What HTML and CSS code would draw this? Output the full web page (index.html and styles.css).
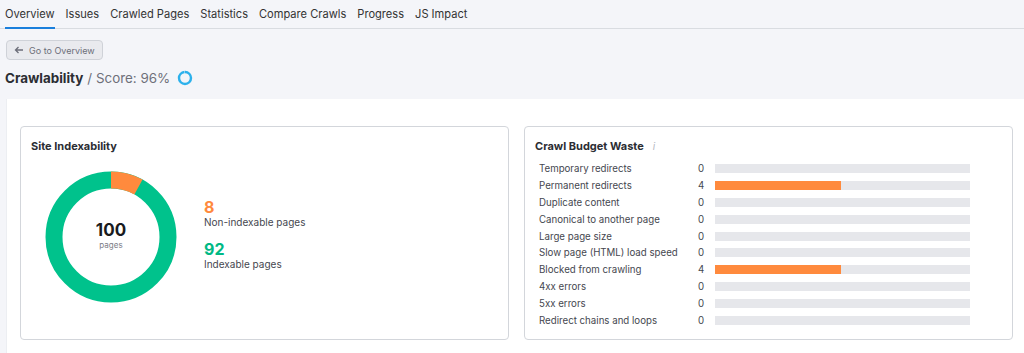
FILE: index.html
```html
<!DOCTYPE html>
<html lang="en">
<head>
    <meta charset="UTF-8">
    <meta name="viewport" content="width=device-width, initial-scale=1.0">
    <title>Site Audit - Crawlability</title>
    <link rel="stylesheet" href="styles.css">
</head>
<body>
    <nav class="tabs">
        <a class="tab active" href="#">Overview</a>
        <a class="tab" href="#">Issues</a>
        <a class="tab" href="#">Crawled Pages</a>
        <a class="tab" href="#">Statistics</a>
        <a class="tab" href="#">Compare Crawls</a>
        <a class="tab" href="#">Progress</a>
        <a class="tab" href="#">JS Impact</a>
    </nav>

    <div class="header">
        <button type="button" class="btn-back">
            <svg width="10" height="8" viewBox="0 0 10 8"><path d="M9 4H1.5M4.5 1L1.5 4l3 3" fill="none" stroke="#6c6e79" stroke-width="1.3"/></svg>
            Go to Overview
        </button>
        <h1 class="title">Crawlability <span class="score">/ Score: 96%</span>
            <svg class="score-ring" width="16" height="16" viewBox="0 0 16 16">
                <circle cx="8" cy="8" r="6" fill="none" stroke="#e6eef6" stroke-width="2.4"/>
                <circle cx="8" cy="8" r="6" fill="none" stroke="#2cb1ec" stroke-width="2.4" stroke-dasharray="36.2 37.7" transform="rotate(-90 8 8)"/>
            </svg>
        </h1>
    </div>

    <div class="panel">
        <div class="card">
            <h2 class="card-title">Site Indexability</h2>
            <div class="index-body">
                <div class="donut">
                    <svg width="132" height="132" viewBox="0 0 132 132">
                        <circle cx="66" cy="66" r="57" fill="none" stroke="#00c28c" stroke-width="17"/>
                        <circle cx="66" cy="66" r="57" fill="none" stroke="#ff8a3d" stroke-width="17" stroke-dasharray="28.65 358.1" transform="rotate(-90 66 66)"/>
                    </svg>
                    <div class="donut-label">
                        <div class="donut-num">100</div>
                        <div class="donut-sub">pages</div>
                    </div>
                </div>
                <div class="legend">
                    <div class="legend-item">
                        <div class="legend-num orange">8</div>
                        <div class="legend-text">Non-indexable pages</div>
                    </div>
                    <div class="legend-item">
                        <div class="legend-num green">92</div>
                        <div class="legend-text">Indexable pages</div>
                    </div>
                </div>
            </div>
        </div>

        <div class="card">
            <h2 class="card-title">Crawl Budget Waste <span class="info">i</span></h2>
            <div class="waste-list">
                <div class="waste-row"><span class="waste-label">Temporary redirects</span><span class="waste-count">0</span><div class="bar"></div></div>
                <div class="waste-row"><span class="waste-label">Permanent redirects</span><span class="waste-count">4</span><div class="bar"><div class="bar-fill" style="width: 49.5%"></div></div></div>
                <div class="waste-row"><span class="waste-label">Duplicate content</span><span class="waste-count">0</span><div class="bar"></div></div>
                <div class="waste-row"><span class="waste-label">Canonical to another page</span><span class="waste-count">0</span><div class="bar"></div></div>
                <div class="waste-row"><span class="waste-label">Large page size</span><span class="waste-count">0</span><div class="bar"></div></div>
                <div class="waste-row"><span class="waste-label">Slow page (HTML) load speed</span><span class="waste-count">0</span><div class="bar"></div></div>
                <div class="waste-row"><span class="waste-label">Blocked from crawling</span><span class="waste-count">4</span><div class="bar"><div class="bar-fill" style="width: 49.5%"></div></div></div>
                <div class="waste-row"><span class="waste-label">4xx errors</span><span class="waste-count">0</span><div class="bar"></div></div>
                <div class="waste-row"><span class="waste-label">5xx errors</span><span class="waste-count">0</span><div class="bar"></div></div>
                <div class="waste-row"><span class="waste-label">Redirect chains and loops</span><span class="waste-count">0</span><div class="bar"></div></div>
            </div>
        </div>
    </div>
</body>
</html>
```

FILE: styles.css
```css
body {
    font-family: Inter, "Noto Sans", sans-serif;
    margin: 0;
    padding: 0;
    background: #f4f5f9;
    color: #333;
    overflow: hidden;
}
.tabs {
    display: flex;
    gap: 11px;
    padding: 0 5px;
    height: 28px;
    border-bottom: 1px solid #d9dce1;
}
.tab {
    font-size: 11.1px;
    color: #333;
    text-decoration: none;
    border-bottom: 2px solid transparent;
    height: 27px;
    box-sizing: border-box;
    line-height: 28px;
}
.tab.active {
    border-bottom-color: #1a7fdc;
    height: 29px;
}
.header {
    padding: 11px 6px 0 5px;
}
.btn-back {
    display: flex;
    align-items: center;
    gap: 5px;
    height: 20px;
    padding: 0 7px;
    margin-left: 1px;
    background: #e9eaee;
    border: 1px solid #cfd2d8;
    border-radius: 4px;
    font-family: inherit;
    font-size: 9px;
    color: #6c6e79;
}
.title {
    display: flex;
    align-items: center;
    margin: 7px 0 0;
    height: 22px;
    font-size: 13.4px;
    font-weight: 700;
    color: #2b2d33;
}
.score {
    font-weight: 400;
    color: #6e7079;
    margin-left: 4px;
}
.score-ring {
    margin-left: 7px;
}
.panel {
    display: flex;
    gap: 15px;
    margin: 10px 0 0 6px;
    padding: 27px 10px 13px 13px;
    background: #fff;
    border-left: 1px solid #eceef2;
}
.card {
    flex: 0 0 489px;
    height: 214px;
    box-sizing: border-box;
    border: 1px solid #d3d6db;
    border-radius: 4px;
    padding: 12px 10px 0;
}
.card-title {
    font-size: 11px;
    font-weight: 700;
    margin: 0;
    color: #2b2d33;
    display: flex;
    align-items: center;
}
.info {
    font-weight: 400;
    font-size: 10px;
    color: #b5b8bf;
    margin-left: 9px;
    font-style: italic;
}
.index-body {
    display: flex;
    align-items: center;
    margin-top: 18px;
    padding-left: 14px;
}
.donut {
    position: relative;
    width: 132px;
    height: 132px;
}
.donut-label {
    position: absolute;
    inset: 0;
    display: flex;
    flex-direction: column;
    align-items: center;
    justify-content: center;
}
.donut-num {
    font-size: 17px;
    font-weight: 700;
    color: #191b20;
    line-height: 18px;
    margin-top: -4px;
}
.donut-sub {
    font-size: 8px;
    color: #7b7d86;
    margin-top: 1px;
}
.legend {
    margin-left: 27px;
    margin-top: -4px;
}
.legend-item + .legend-item {
    margin-top: 12px;
}
.legend-num {
    font-size: 16px;
    font-weight: 700;
    line-height: 17px;
}
.legend-num.orange {
    color: #ff8a3d;
}
.legend-num.green {
    color: #00b985;
}
.legend-text {
    font-size: 10px;
    color: #45474f;
    line-height: 13px;
}
.waste-list {
    margin-top: 7px;
    padding-left: 4px;
}
.waste-row {
    display: flex;
    align-items: center;
    height: 16.9px;
}
.waste-label {
    width: 159px;
    font-size: 9.7px;
    color: #45474f;
}
.waste-count {
    width: 17px;
    font-size: 9.7px;
    color: #45474f;
}
.bar {
    width: 255px;
    height: 9px;
    background: #e6e7eb;
}
.bar-fill {
    height: 100%;
    background: #ff8a3d;
}
```
